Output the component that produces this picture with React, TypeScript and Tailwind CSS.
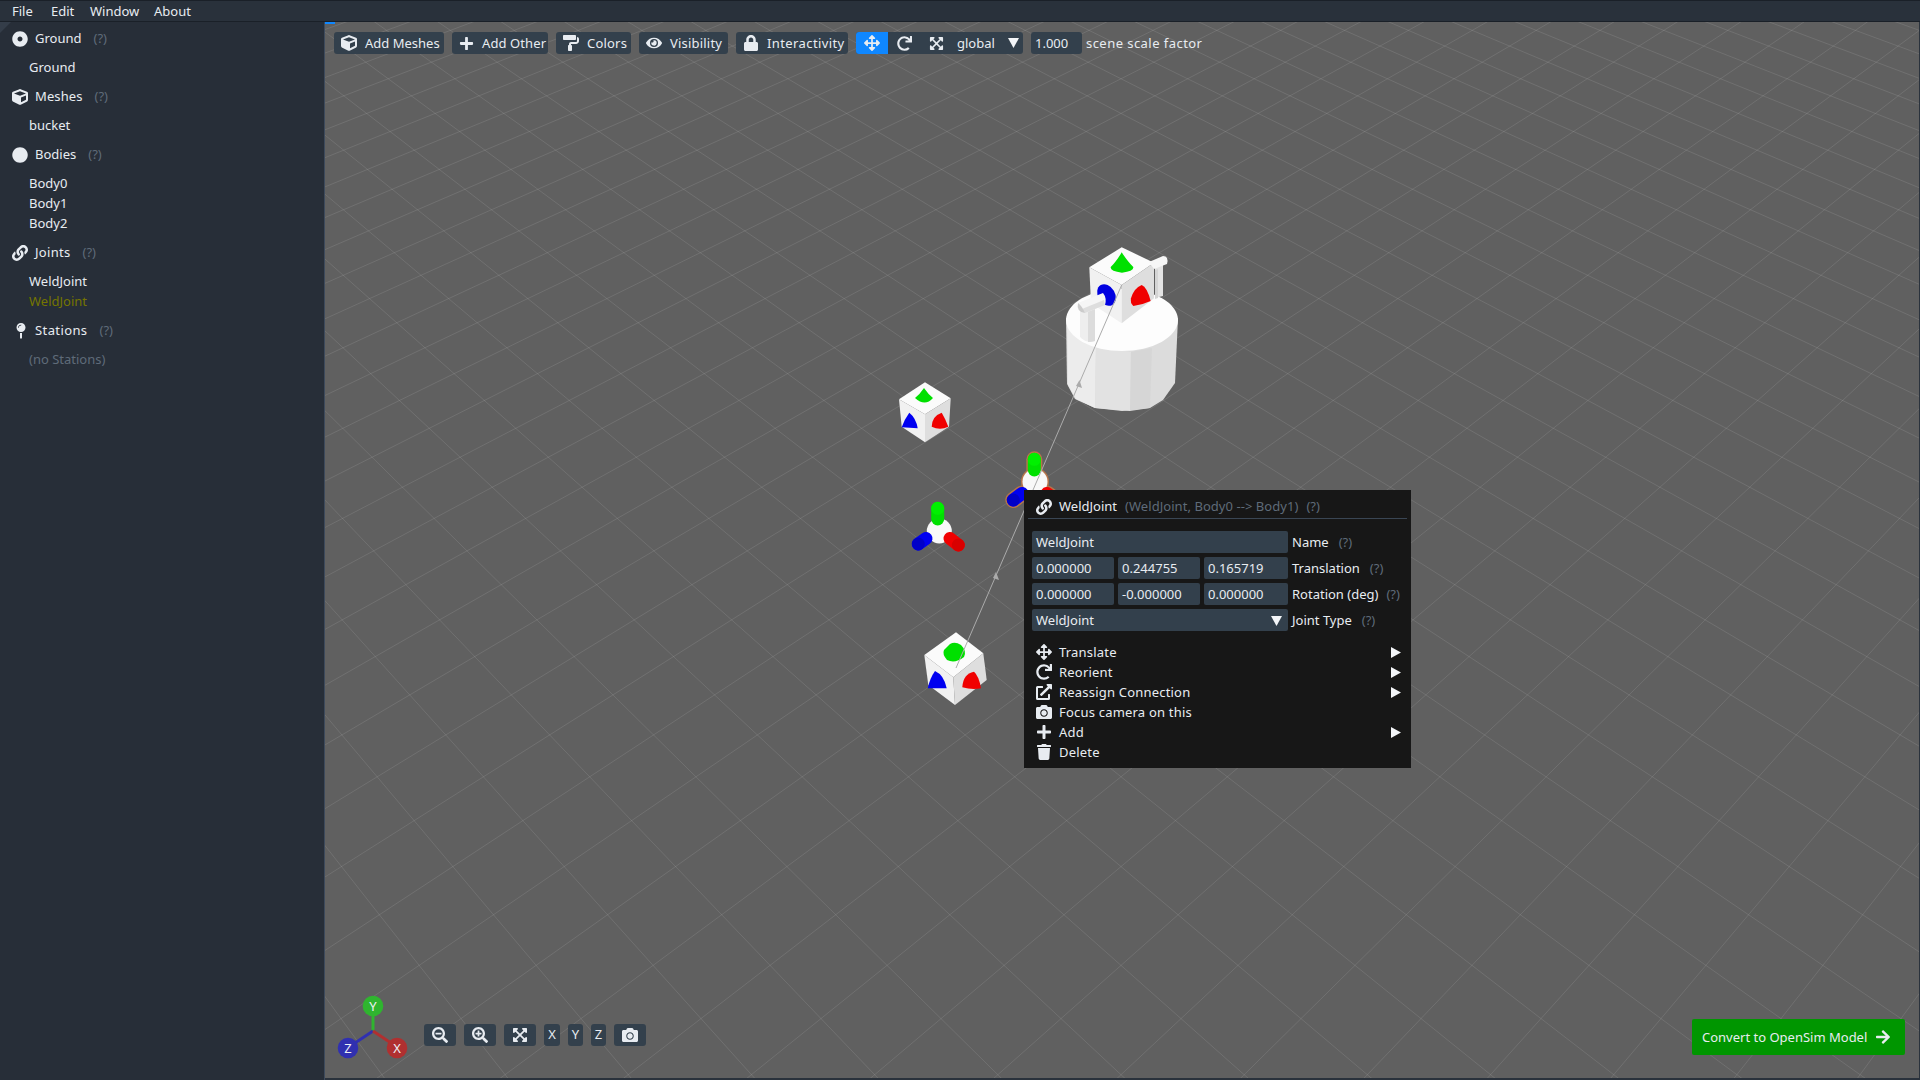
import React from "react";
import {
  FaDotCircle, FaCube, FaCircle, FaLink, FaMapPin, FaPlus, FaPaintRoller, FaEye, FaLock,
  FaArrowsAlt, FaRedo, FaExpandArrowsAlt, FaSearchMinus, FaSearchPlus, FaCamera,
  FaExternalLinkAlt, FaTrash, FaArrowRight,
} from "react-icons/fa";

const yAt = (n: number) => -1094 + 1 / (5.957e-4 - 1.2236e-5 * n);
const pt = (n: number, m: number) => {
  const y = yAt(n);
  const s = 0.0568 * (y + 1094);
  return `${(1121 + (m / 2) * s).toFixed(1)},${y.toFixed(1)}`;
};

function Grid() {
  const lines: string[] = [];
  for (let a = -60; a <= 60; a++) {
    const c = 2 * a + 1;
    lines.push(`${pt(-27, c + 27)} ${pt(15, c - 15)}`);
    lines.push(`${pt(-27, c - 27)} ${pt(15, c + 15)}`);
  }
  return (
    <g stroke="#ffffff" strokeOpacity="0.1" strokeWidth="1" fill="none">
      {lines.map((l, i) => (
        <polyline key={i} points={l} />
      ))}
    </g>
  );
}

type Cube = { T: number[]; L: number[]; R: number[]; C: number[]; B: number[]; LB: number[]; RB: number[] };
const P = (...p: number[][]) => p.map((q) => q.join(",")).join(" ");
function CubeShape({ c }: { c: Cube }) {
  return (
    <g>
      <polygon points={P(c.T, c.R, c.C, c.L)} fill="#fbfbfb" />
      <polygon points={P(c.L, c.C, c.B, c.LB)} fill="#f1f1f1" />
      <polygon points={P(c.C, c.R, c.RB, c.B)} fill="#dedede" />
    </g>
  );
}

function Frame({ cx, cy, gx, gy, gb, bx, by, b2x, b2y, rx, ry, r2x, r2y, glow }: any) {
  const halo = "#b5744a";
  const cyl = (x1: number, y1: number, x2: number, y2: number, col: string, cap: string) => (
    <g>
      <line x1={x1} y1={y1} x2={x2} y2={y2} stroke={col} strokeWidth="13" strokeLinecap="round" />
      <circle cx={x1} cy={y1} r="6.5" fill={cap} />
    </g>
  );
  const glowLine = (x1: number, y1: number, x2: number, y2: number) => (
    <line x1={x1} y1={y1} x2={x2} y2={y2} stroke={halo} strokeWidth="16" strokeLinecap="round" />
  );
  return (
    <g>
      {glow && glowLine(gx, gy, gx, gb)}
      {glow && glowLine(bx, by, b2x, b2y)}
      {glow && glowLine(rx, ry, r2x, r2y)}
      {glow && <circle cx={cx} cy={cy} r={14} fill={halo} />}
      <circle cx={cx} cy={cy} r={12.5} fill="#f8f8f8" />
      {cyl(bx, by, b2x, b2y, "#0000f0", "#0000c8")}
      {cyl(rx, ry, r2x, r2y, "#f00000", "#d80000")}
      {cyl(gx, gy, gx, gb, "#00e000", "#00f000")}
    </g>
  );
}

function Scene() {
  return (
    <svg className="absolute inset-0 w-full h-full" viewBox="325 22 1594 1056">
      <Grid />
      {/* bucket */}
      <g>
        <path d="M1066 318 L1067 384 L1075 399 L1095 408 L1122 411 L1150 408 L1163 400 L1175 383 L1178 318 Z" fill="#dcdcdc" />
        <path d="M1067 318 L1068 385 L1076 399 L1095 408 L1096 340 Z" fill="#ececec" />
        <path d="M1096 345 L1095 408 L1130 411 L1131 352 Z" fill="#e2e2e2" />
        <path d="M1131 352 L1130 411 L1150 408 L1152 348 Z" fill="#d6d6d6" />
        <ellipse cx="1122" cy="320" rx="56" ry="31" fill="#fdfdfd" />
        {/* left elbow, vertical part */}
        <path d="M1080 308 L1080 337 Q1087 344 1095 341 L1095 306 Z" fill="#eeeeee" />
        <path d="M1088 308 L1088 342 Q1092 342 1095 341 L1095 306 Z" fill="#dcdcdc" />
        {/* right elbow, vertical part */}
        <path d="M1155 266 L1163 264 L1163 296 L1155 298 Z" fill="#e4e4e4" />
      </g>
      <CubeShape c={{ T: [1121.7, 247.3], L: [1089.3, 267.3], R: [1154, 262.7], C: [1121.7, 285], B: [1121.7, 323.3], LB: [1091, 303.3], RB: [1154, 298.3] }} />
      <path d="M1149 262 L1163 256 Q1169 256 1167 264 L1154 269 Z" fill="#f6f6f6" />
      <path d="M1155 270 L1155 299 L1158 298 L1158 269 Z" fill="#d4d4d4" />
      <path d="M1121.7 252.3 Q1128 262 1133.3 267 Q1134 271 1122 272.7 Q1110 271 1110.7 267 Q1116 262 1121.7 252.3 Z" fill="#00e000" />
      <path d="M1141.7 285 Q1147 287 1150.7 301 Q1142 305 1133.3 306 Q1130 303 1131 298.3 Q1134 288 1141.7 285 Z" fill="#f00000" />
      {/* blue ring with the white stick in front */}
      <ellipse cx="1106.5" cy="295" rx="8.5" ry="11.5" transform="rotate(-30 1106.5 295)" fill="#0000e0" />
      <path d="M1078 303 L1103 293 Q1107 298 1105 305 L1085 313 Z" fill="#f6f6f6" />
      <path d="M1082 309 L1104 300 L1105 305 L1085 313 Z" fill="#dedede" />
      <path d="M1078 303 Q1082 306 1085 313 Q1076 312 1078 303 Z" fill="#cccccc" />
      {/* cube 1 */}
      <CubeShape c={{ T: [925, 382.3], L: [899, 399.3], R: [950.7, 398.3], C: [925, 414.3], B: [925, 442.3], LB: [901.7, 426.7], RB: [949, 426.7] }} />
      <path d="M924 388 Q928 394 933 398 Q925 407 915 398 Q920 394 924 388 Z" fill="#00e000" />
      <path d="M909.3 412.7 Q916 418 917.7 428.3 L901.7 427.3 Q904 420 909.3 412.7 Z" fill="#0000f0" />
      <path d="M941.7 412.7 Q945 418 948.3 426.7 Q940 431 931.7 426.7 Q932 416 941.7 412.7 Z" fill="#f00000" />
      {/* frames */}
      <Frame cx={939.3} cy={531} gx={937.7} gy={508.3} gb={519} bx={918.3} by={544} b2x={926} b2y={538.5} rx={958.3} ry={545} r2x={950} r2y={538.5} />
      <Frame glow cx={1035} cy={481.7} gx={1034.3} gy={459.3} gb={470} bx={1013.3} by={500} b2x={1022} b2y={493.5} rx={1056} ry={500} r2x={1047} r2y={493.5} />
      {/* cube 3 */}
      <CubeShape c={{ T: [956, 632.3], L: [924.3, 655], R: [983.3, 653.3], C: [953.3, 677.3], B: [955, 705], LB: [928.3, 685], RB: [986.7, 680] }} />
      <path d="M950 644 Q955 641 961 645 Q967 651 964 657 Q955 664 947 660 Q942 654 944 650 Z" fill="#00e000" />
      <path d="M935 671 Q944 675 946.7 688.3 L927.7 688.3 Q930 678 935 671 Z" fill="#0000f0" />
      <path d="M974 671.7 Q979 676 981 688.3 Q972 690 962.3 687.3 Q963 674 974 671.7 Z" fill="#f00000" />
      {/* connection line */}
      <line x1="956" y1="668" x2="1121.7" y2="285" stroke="#ababab" strokeWidth="1" />
      <polygon points="996,572 999,580 993,578" fill="#ababab" />
      <polygon points="1079.5,380 1082,388 1076,386" fill="#ababab" />
    </svg>
  );
}

const Q = ({ ml = "ml-3" }: { ml?: string }) => <span className={`${ml} text-[#5f6b79]`}>(?)</span>;

function Section({ icon, title, items, qml, track = "" }: { icon: React.ReactNode; title: string; items: React.ReactNode[]; qml?: string; track?: string }) {
  return (
    <div>
      <div className="h-5 flex items-center pt-px">
        <span className="w-[35px] pl-3 flex items-center shrink-0">{icon}</span>
        <span className={track}>{title}</span>
        <Q ml={qml} />
      </div>
      <div className="mt-[9px] mb-[9px] pl-[29px]">
        {items.map((it, i) => (
          <div key={i} className="h-5 leading-5">{it}</div>
        ))}
      </div>
    </div>
  );
}

function TbBtn({ icon, label, w, track = "" }: { icon: React.ReactNode; label: string; w: string; track?: string }) {
  return (
    <div className={`${w} h-[22px] bg-[#33404c] rounded-[3px] flex items-center pl-[7px] gap-2`}>
      {icon}
      <span className={`pt-px ${track}`}>{label}</span>
    </div>
  );
}

const Tri = ({ cls = "" }: { cls?: string }) => (
  <svg width="10" height="11" viewBox="0 0 10 11" className={cls}>
    <polygon points="0,0 10,5.5 0,11" fill="#f3f5f8" />
  </svg>
);
const Down = () => (
  <svg width="11" height="10" viewBox="0 0 11 10">
    <polygon points="0,0 11,0 5.5,10" fill="#f3f5f8" />
  </svg>
);

const inputCls = "h-[22px] bg-[#33404c] rounded-[2px] pl-1 pt-px flex items-center";

function MenuRow({ icon, label, arrow }: { icon: React.ReactNode; label: string; arrow?: boolean }) {
  return (
    <div className="h-5 flex items-center">
      <span className="w-[16px] flex justify-center shrink-0">{icon}</span>
      <span className="ml-[7px] pt-[2px] tracking-[0.2px]">{label}</span>
      {arrow && <Tri cls="ml-auto mr-[10px] mt-[1px]" />}
    </div>
  );
}

function Popup() {
  return (
    <div className="absolute left-[699px] top-[468px] w-[387px] h-[278px] bg-[#171717] text-[#e8ecf1]">
      <div className="mx-1 h-[29px] border-b border-[#3a4654] flex items-center pl-2 pt-[5px]">
        <span className="w-[16px] flex justify-center"><FaLink size={16} /></span>
        <span className="ml-[7px]">WeldJoint</span>
        <span className="ml-2 text-[#5f6b79] tracking-[0.05px]">(WeldJoint, Body0 --&gt; Body1)</span>
        <Q ml="ml-2" />
      </div>
      <div className="pl-2 mt-3 flex flex-col gap-1">
        <div className="flex items-center">
          <div className={`${inputCls} w-[256px]`}>WeldJoint</div>
          <span className="ml-1 pt-px">Name</span><Q ml="ml-2.5 pt-px" />
        </div>
        <div className="flex items-center">
          <div className={`${inputCls} w-[82px]`}>0.000000</div>
          <div className={`${inputCls} w-[82px] ml-1`}>0.244755</div>
          <div className={`${inputCls} w-[84px] ml-1`}>0.165719</div>
          <span className="ml-1 pt-px">Translation</span><Q ml="ml-2.5 pt-px" />
        </div>
        <div className="flex items-center">
          <div className={`${inputCls} w-[82px]`}>0.000000</div>
          <div className={`${inputCls} w-[82px] ml-1`}>-0.000000</div>
          <div className={`${inputCls} w-[84px] ml-1`}>0.000000</div>
          <span className="ml-1 pt-px">Rotation (deg)</span><Q ml="ml-2 pt-px" />
        </div>
        <div className="flex items-center">
          <div className={`${inputCls} w-[256px] pr-[6px] justify-between`}>WeldJoint<Down /></div>
          <span className="ml-1 pt-px">Joint Type</span><Q ml="ml-2.5 pt-px" />
        </div>
      </div>
      <div className="pl-3 mt-[11px]">
        <MenuRow icon={<FaArrowsAlt size={16} />} label="Translate" arrow />
        <MenuRow icon={<FaRedo size={16} />} label="Reorient" arrow />
        <MenuRow icon={<FaExternalLinkAlt size={16} />} label="Reassign Connection" arrow />
        <MenuRow icon={<FaCamera size={16} />} label="Focus camera on this" />
        <MenuRow icon={<FaPlus size={16} />} label="Add" arrow />
        <MenuRow icon={<FaTrash size={16} />} label="Delete" />
      </div>
    </div>
  );
}

function Gizmo() {
  return (
    <svg className="absolute left-[12px] top-[973px]" width="100" height="100" viewBox="0 0 100 100" style={{ overflow: "visible" }}>
      <line x1="36" y1="36" x2="36" y2="12" stroke="#2fb52f" strokeWidth="3" />
      <line x1="36" y1="36" x2="12" y2="52" stroke="#3030b0" strokeWidth="3" />
      <line x1="36" y1="36" x2="60" y2="52" stroke="#b03030" strokeWidth="3" />
      <circle cx="36" cy="11" r="10.3" fill="#2fb52f" />
      <circle cx="11" cy="53" r="10.3" fill="#3030b0" />
      <circle cx="60" cy="53" r="10.3" fill="#b03030" />
      <text x="36" y="15.5" textAnchor="middle" fontSize="13" fill="#eef1f5" fontFamily="Noto Sans">Y</text>
      <text x="11" y="57.5" textAnchor="middle" fontSize="13" fill="#eef1f5" fontFamily="Noto Sans">Z</text>
      <text x="60" y="57.5" textAnchor="middle" fontSize="13" fill="#eef1f5" fontFamily="Noto Sans">X</text>
    </svg>
  );
}

export default function App() {
  const sm = "flex items-center justify-center h-[22px] bg-[#33404c] rounded-[3px]";
  return (
    <div className="w-[1920px] h-[1080px] overflow-hidden flex flex-col bg-[#1c232c] text-[#e8ecf1] text-[13px]" style={{ fontFamily: '"Noto Sans", sans-serif' }}>
      <div className="h-[22px] shrink-0 bg-[#29313b] border-y border-[#1a2028] flex items-center pl-3 pt-px">
        <span className="w-[39px]">File</span>
        <span className="w-[39px]">Edit</span>
        <span className="w-[64px]">Window</span>
        <span>About</span>
      </div>
      <div className="flex flex-1 min-h-0">
        <div className="relative w-[324px] shrink-0 bg-[#272e38] border-r border-[#3d4a5c] pt-[6px] box-content">
          <svg className="absolute left-0 top-0" width="12" height="12" viewBox="0 0 12 12">
            <polygon points="0,0 11,0 0,11" fill="#343d49" />
          </svg>
          <Section icon={<FaDotCircle size={16} />} title="Ground" items={["Ground"]} />
          <Section icon={<FaCube size={16} />} title="Meshes" track="tracking-[0.1px]" items={["bucket"]} />
          <Section icon={<FaCircle size={16} />} title="Bodies" items={["Body0", "Body1", "Body2"]} />
          <Section icon={<FaLink size={16} />} title="Joints" track="tracking-[0.3px]" items={["WeldJoint", <span className="text-[#757500]">WeldJoint</span>]} />
          <Section icon={<span className="ml-[1px]"><FaMapPin size={16} /></span>} title="Stations" track="tracking-[0.4px]" items={[<span className="text-[#5f6b79]">(no Stations)</span>]} />
        </div>
        <div className="relative flex-1 bg-[#606060] border-b-2 border-r border-[#2a323c]">
          <Scene />
          <div className="absolute left-0 top-0 w-[10px] h-[2px] bg-[#0f87ff]" />
          <div className="absolute left-[9px] top-[10px] flex items-center gap-2">
            <TbBtn w="w-[110px]" icon={<FaCube size={16} />} label="Add Meshes" />
            <TbBtn w="w-[96px]" icon={<FaPlus size={15} />} label="Add Other" track="tracking-[0.1px]" />
            <TbBtn w="w-[75px]" icon={<FaPaintRoller size={16} />} label="Colors" track="tracking-[0.2px]" />
            <TbBtn w="w-[89px]" icon={<FaEye size={16} />} label="Visibility" track="tracking-[0.2px]" />
            <TbBtn w="w-[112px]" icon={<FaLock size={16} />} label="Interactivity" track="tracking-[0.4px]" />
            <div className="w-[167px] h-[22px] bg-[#33404c] rounded-[3px] flex items-center">
              <span className="w-8 h-[22px] bg-[#0f87ff] rounded-l-[3px] flex items-center justify-center"><FaArrowsAlt size={16} /></span>
              <span className="w-8 flex justify-center"><FaRedo size={15} /></span>
              <span className="w-8 flex justify-center"><FaExpandArrowsAlt size={15} /></span>
              <span className="ml-[5px] pt-px">global</span>
              <span className="ml-auto mr-[4px]"><Down /></span>
            </div>
            <div className="w-[51px] h-[22px] bg-[#33404c] rounded-[3px] flex items-center pl-1 pt-px">1.000</div>
            <span className="-ml-1 pt-px tracking-[0.45px]">scene scale factor</span>
          </div>
          <Gizmo />
          <div className="absolute left-[99px] top-[1002px] flex">
            <div className={`${sm} w-8`}><FaSearchMinus size={16} /></div>
            <div className={`${sm} w-8 ml-2`}><FaSearchPlus size={16} /></div>
            <div className={`${sm} w-8 ml-2`}><FaExpandArrowsAlt size={16} /></div>
            <div className={`${sm} w-4 ml-2`}>X</div>
            <div className={`${sm} w-[15px] ml-2`}>Y</div>
            <div className={`${sm} w-[15px] ml-2`}>Z</div>
            <div className={`${sm} w-8 ml-2`}><FaCamera size={16} /></div>
          </div>
          <div className="absolute left-[1367px] top-[997px] w-[213px] h-[36px] bg-[#009600] rounded-[2px] flex items-center pl-[10px]">
            <span className="pt-px">Convert to OpenSim Model</span>
            <span className="ml-auto mr-[14px]"><FaArrowRight size={16} /></span>
          </div>
          <Popup />
        </div>
      </div>
    </div>
  );
}
